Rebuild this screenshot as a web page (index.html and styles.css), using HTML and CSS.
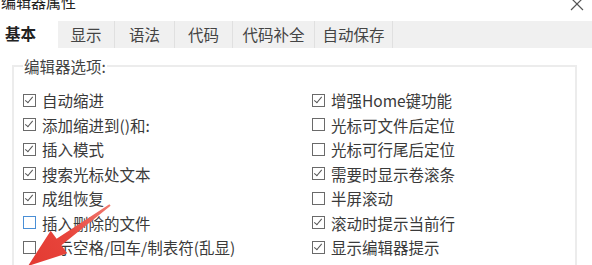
FILE: index.html
```html
<!DOCTYPE html>
<html>
<head>
<meta charset="utf-8">
<link rel="stylesheet" href="styles.css">
</head>
<body>
<div class="window">
  <div class="titlebar">
    <span class="title">编辑器属性</span>
    <svg class="close" width="14" height="14" viewBox="0 0 14 14"><path d="M1 1L13 13M13 1L1 13" stroke="#555" stroke-width="1.2" fill="none"/></svg>
  </div>
  <div class="tabs">
    <div class="tab active">基本</div>
    <div class="tab">显示</div>
    <div class="tab">语法</div>
    <div class="tab">代码</div>
    <div class="tab wide">代码补全</div>
    <div class="tab wide">自动保存</div>
  </div>
  <fieldset class="group">
    <legend class="legend">编辑器选项:</legend>
    <div class="grid">
      <div class="col">
        <label class="opt"><span class="box on"></span>自动缩进</label>
        <label class="opt"><span class="box on"></span>添加缩进到()和:</label>
        <label class="opt"><span class="box on"></span>插入模式</label>
        <label class="opt"><span class="box on"></span>搜索光标处文本</label>
        <label class="opt"><span class="box on"></span>成组恢复</label>
        <label class="opt"><span class="box focus"></span>插入删除的文件</label>
        <label class="opt"><span class="box"></span>显示空格/回车/制表符(乱显)</label>
      </div>
      <div class="col">
        <label class="opt"><span class="box on"></span>增强Home键功能</label>
        <label class="opt"><span class="box"></span>光标可文件后定位</label>
        <label class="opt"><span class="box"></span>光标可行尾后定位</label>
        <label class="opt"><span class="box on"></span>需要时显示卷滚条</label>
        <label class="opt"><span class="box"></span>半屏滚动</label>
        <label class="opt"><span class="box on"></span>滚动时提示当前行</label>
        <label class="opt"><span class="box on"></span>显示编辑器提示</label>
      </div>
    </div>
  </fieldset>
  <svg class="arrow" width="140" height="80" viewBox="0 195 140 80">
    <defs>
      <linearGradient id="ag" x1="110" y1="205" x2="28" y2="265" gradientUnits="userSpaceOnUse">
        <stop offset="0" stop-color="#f07a70"/>
        <stop offset="0.5" stop-color="#e8453c"/>
        <stop offset="1" stop-color="#e33a32"/>
      </linearGradient>
    </defs>
    <polygon points="109.4,204.2 56.6,238.8 50.7,230.7 28,266 67.3,253.3 61.4,245.2 110.6,205.8" fill="url(#ag)"/>
  </svg>
</div>
</body>
</html>
```

FILE: styles.css
```css
html, body {
  margin: 0;
  padding: 0;
  background: #fff;
}
body {
  width: 592px;
  height: 265px;
  overflow: hidden;
  font-family: "Noto Sans CJK SC", "Liberation Sans", sans-serif;
  color: #333;
  font-size: 15px;
}
.window {
  position: relative;
  width: 592px;
  height: 265px;
  overflow: hidden;
}
.titlebar {
  height: 21px;
  display: flex;
  justify-content: space-between;
  align-items: flex-start;
}
.title {
  font-size: 15px;
  line-height: 16px;
  margin-top: -6px;
  margin-left: 1px;
  color: #222;
}
.close {
  margin-top: -3px;
  margin-right: 8px;
}
.tabs {
  height: 27px;
  background: #f0f0f0;
  display: flex;
}
.tab {
  width: 57px;
  box-sizing: border-box;
  border-right: 1px solid #e0e0e0;
  line-height: 27px;
  text-align: center;
  color: #444;
  font-size: 15.5px;
}
.tab.active {
  background: #fff;
  color: #222;
  font-weight: 600;
  text-align: left;
  padding-left: 5px;
  margin-top: -3px;
  height: 31px;
  line-height: 30px;
  border-right: none;
  width: 58px;
}
.tab:nth-child(3) { width: 60px; }
.tab:nth-child(4) { width: 58px; }
.tab.wide:nth-child(5) { width: 82px; }
.tab.wide:nth-child(6) { width: 78px; }
.group {
  margin: 7px 15px 0 12px;
  padding: 0 0 0 9px;
  border: 2px solid #ececec;
  height: 260px;
  box-sizing: border-box;
}
.legend {
  padding: 0 1px;
  margin-left: 0;
  line-height: 22px;
  font-size: 15.5px;
  color: #444;
}
.grid {
  display: grid;
  grid-template-columns: 289px 1fr;
  padding-top: 11px;
}
.col {
  display: flex;
  flex-direction: column;
}
.opt {
  height: 24.5px;
  display: flex;
  align-items: center;
  font-size: 15.5px;
  color: #3a3a3a;
  white-space: nowrap;
}
.box {
  width: 13px;
  height: 13px;
  box-sizing: border-box;
  border: 1px solid #6a6a6a;
  margin-right: 6px;
  flex: none;
  background: #fff;
  position: relative;
}
.box.focus {
  border-color: #4a8fd6;
}
.box.on::after {
  content: "";
  position: absolute;
  left: 3px;
  top: 0px;
  width: 3px;
  height: 7px;
  border-right: 1.4px solid #555;
  border-bottom: 1.4px solid #555;
  transform: rotate(40deg);
}
.arrow {
  position: absolute;
  left: 0;
  top: 195px;
}
```
